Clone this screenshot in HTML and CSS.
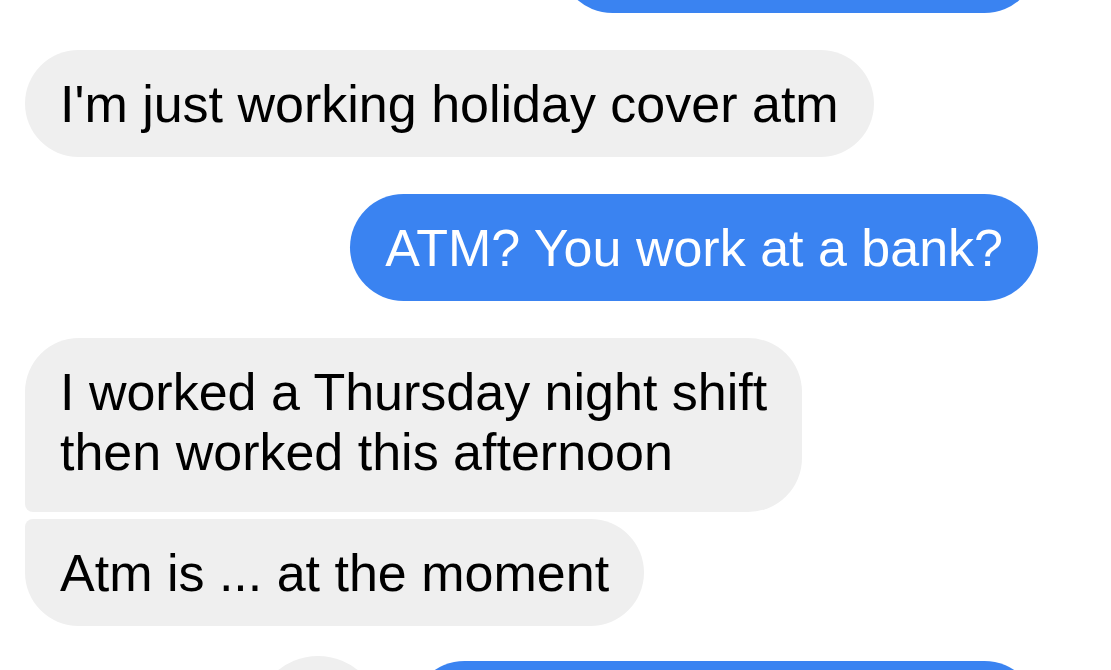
FILE: index.html
```html
<!DOCTYPE html>
<html lang="en">
<head>
  <meta charset="UTF-8">
  <meta name="viewport" content="width=device-width, initial-scale=1.0">
  <title>Messages</title>
  <link rel="stylesheet" href="styles.css">
</head>
<body>

  <div class="thread">
    <div class="msg out stub-top"></div>

    <div class="msg in">I'm just working holiday cover atm</div>

    <div class="msg out">ATM? You work at a bank?</div>

    <div class="group">
      <div class="msg in first tall">I worked a Thursday night shift<br>then worked this afternoon</div>
      <div class="msg in last">Atm is ... at the moment</div>
    </div>

    <div class="row-out">
      <div class="reaction"></div>
      <div class="msg out stub-bottom"></div>
    </div>
  </div>

</body>
</html>
```

FILE: styles.css
```css
* {
  margin: 0;
  padding: 0;
  box-sizing: border-box;
}

html,
body {
  overflow: hidden;
}

body {
  font-family: "Liberation Sans", Arial, sans-serif;
  background-color: #ffffff;
  width: 1111px;
  height: 670px;
}

.thread {
  display: flex;
  flex-direction: column;
  gap: 37px;
  padding: 0 73px 0 25px;
  margin-top: -94px;
}

.msg {
  font-size: 52px;
  line-height: 60px;
  padding: 24px 35px 23px;
  border-radius: 54px;
  white-space: nowrap;
}

.msg.in {
  align-self: flex-start;
  background-color: #efefef;
  color: #000;
}

.msg.out {
  align-self: flex-end;
  background-color: #3a83f1;
  color: #fff;
}

.msg.tall {
  padding-bottom: 30px;
}

/* stacked bubbles from the same sender */
.group {
  display: flex;
  flex-direction: column;
  align-items: flex-start;
  gap: 7px;
}

.msg.first {
  border-bottom-left-radius: 8px;
}

.msg.last {
  border-top-left-radius: 8px;
}

/* bubbles cut by the scroll edge */
.stub-top {
  width: 479px;
  height: 107px;
}

.stub-bottom {
  width: 627px;
  height: 107px;
}

.row-out {
  display: flex;
  justify-content: flex-end;
  align-items: flex-start;
  margin-top: -2px;
}

.row-out .msg.out {
  align-self: flex-start;
}

.reaction {
  width: 126px;
  height: 126px;
  border-radius: 50%;
  background-color: #efefef;
  margin-top: -5px;
  margin-right: 30px;
}
```
